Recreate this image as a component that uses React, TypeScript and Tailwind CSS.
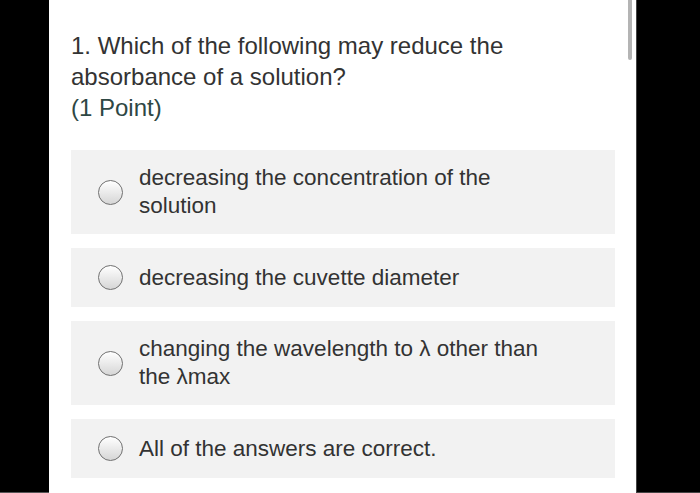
import React from "react";

const options: { text: React.ReactNode; two: boolean }[] = [
  { text: <>decreasing the concentration of the<br />solution</>, two: true },
  { text: <>decreasing the cuvette diameter</>, two: false },
  { text: <>changing the wavelength to λ other than<br />the λmax</>, two: true },
  { text: <>All of the answers are correct.</>, two: false },
];

function Radio() {
  return (
    <div className="w-[25px] h-[25px] shrink-0 rounded-full border-[1.5px] border-[#707070] bg-gradient-to-b from-[#ffffff] to-[#d6d6d6] shadow-[inset_0_1px_1px_rgba(255,255,255,0.9)]" />
  );
}

export default function App() {
  return (
    <div
      className="w-[700px] h-[493px] bg-black flex overflow-hidden"
      style={{ fontFamily: '"Liberation Sans", Arial, sans-serif' }}
    >
      <div className="w-[49px] shrink-0 h-full bg-black border-b border-[#555]" />
      <div className="relative w-[587px] shrink-0 h-full bg-white pl-[22px] pr-[21px] pt-[30px]">
        <div className="absolute right-[4px] top-0 w-[4px] h-[60px] rounded-b-full bg-[#b4b4b4]" />
        <div className="text-[24px] leading-[31px] text-[#333333]">
          <div>1. Which of the following may reduce the</div>
          <div>absorbance of a solution?</div>
          <div className="text-[#2e4744]">(1 Point)</div>
        </div>
        <div className="mt-[27px] flex flex-col gap-[14px]">
          {options.map((o, i) => (
            <div key={i} className="bg-[#f2f2f2] py-[14px] pl-[27px] pr-4">
              <div className="flex items-center gap-[16px] min-h-[31px]">
                <Radio />
                <div className="text-[22.5px] leading-[28px] text-[#333333]">{o.text}</div>
              </div>
            </div>
          ))}
        </div>
      </div>
      <div className="flex-1 h-full bg-black border-l border-b border-[#444]" />
    </div>
  );
}
